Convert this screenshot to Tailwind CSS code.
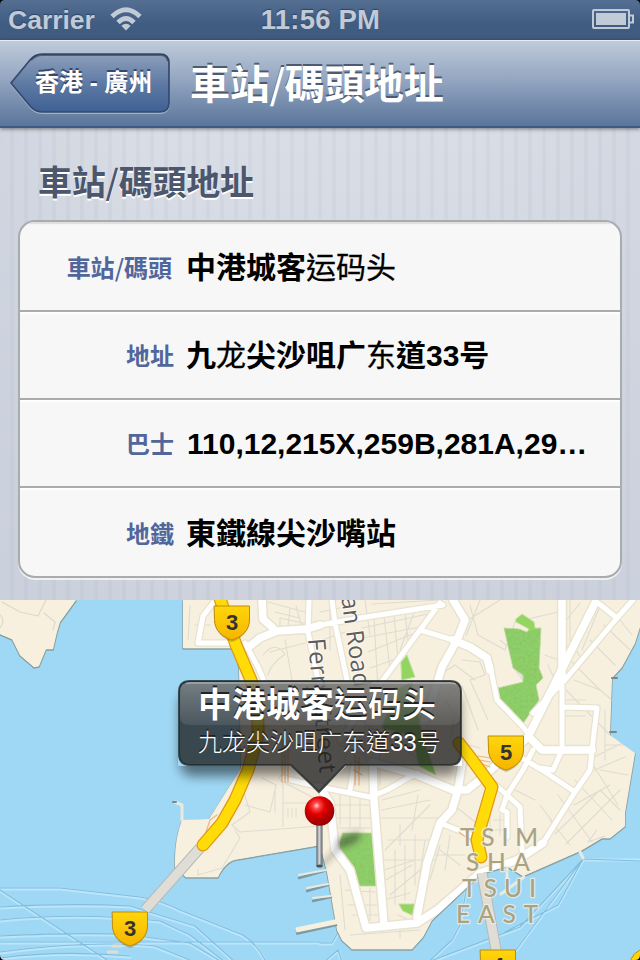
<!DOCTYPE html>
<html lang="zh-Hant">
<head>
<meta charset="utf-8">
<title>車站/碼頭地址</title>
<script src="https://cdn.jsdelivr.net/npm/@tailwindcss/browser@4"></script>
</head>
<body class="bg-black">
<div class="relative flex h-[960px] w-[640px] flex-col overflow-hidden font-['Liberation_Sans','Noto_Sans_CJK_TC',sans-serif]">

  <!-- Status bar -->
  <header class="grid h-10 shrink-0 grid-cols-3 items-center bg-linear-to-b from-[#546f92] via-[#405c81] via-60% to-[#3f5b80] px-2 text-[#c1cad7]">
    <div class="flex items-center gap-[15px]">
      <span class="text-[26.5px] leading-10 font-bold [text-shadow:0_-1px_1px_#2c4465]">Carrier</span>
      <svg class="mt-[-2px] h-6 w-8" viewBox="0 0 32 24" fill="none" stroke="#c1cad7" stroke-width="4.800">
        <path d="M2 9.500Q16 -4 30 9.500" /><path d="M8 15.500Q16 7.500 24 15.500" />
        <path d="M16 23.500L11.300 18.800Q16 14.800 20.700 18.800Z" fill="#c1cad7" stroke="none" />
      </svg>
    </div>
    <div class="pl-px text-center text-[27.5px] leading-10 font-bold tracking-[0.2px] whitespace-nowrap [text-shadow:0_-1px_1px_#2c4465]">11:56 PM</div>
    <svg class="mt-[-2px] -mr-[3px] h-[22px] w-[44px] justify-self-end" viewBox="0 0 44 22" fill="none">
      <rect x="2" y="2" width="36" height="18" rx="1" stroke="#c1cad7" stroke-width="2" />
      <rect x="5" y="5" width="30" height="12" fill="#c1cad7" />
      <path d="M39 7.500H42V14.500H39" stroke="#c1cad7" stroke-width="2" />
    </svg>
  </header>

  <!-- Navigation bar -->
  <nav class="relative z-10 flex h-[88px] shrink-0 items-start border-t border-b-2 border-t-[#e4ebf2] border-b-[#3d5a85] bg-linear-to-b from-[#bfcbdb] via-[#8fa2be] to-[#5a759b] pt-[11px] pl-[9px] shadow-[0_1px_4px_#0007]">
    <div class="relative h-[62px] w-[162px] pt-[3px]">
      <svg class="absolute inset-0" width="162" height="62" viewBox="0 0 162 62">
        <defs><linearGradient id="back" x2="0" y2="1"><stop stop-color="#8d9fbb" /><stop offset=".5" stop-color="#5f7ba4" /><stop offset="1" stop-color="#3e6094" /></linearGradient></defs>
        <path d="M2 31L21 8Q26 2 33 2H151Q160 2 160 11V51Q160 60 151 60H33Q26 60 21 54Z" transform="translate(0 1)" fill="none" stroke="#b3c1d5" stroke-width="1.500" />
        <path d="M2 31L21 8Q26 2 33 2H151Q160 2 160 11V51Q160 60 151 60H33Q26 60 21 54Z" fill="url(#back)" stroke="#34496b" stroke-width="1.700" />
        <path d="M22 8Q27 3 33 3H151Q158 3 159 9" fill="none" stroke="#29364d" stroke-opacity=".6" stroke-width="2" />
      </svg>
      <span class="relative block pl-[26px] text-[24px] leading-[56px] font-bold whitespace-nowrap text-white [text-shadow:0_-2px_0_#36496a]">香港 - 廣州</span>
    </div>
    <h1 class="ml-[19px] pt-px font-['Noto_Sans_CJK_TC',sans-serif] text-[40px] leading-[58px] font-bold tracking-[-0.3px] whitespace-nowrap text-white [text-shadow:0_-2px_0_#4d5b70]">車站<span class="font-medium">/</span>碼頭地址</h1>
  </nav>

  <!-- Grouped table -->
  <main class="flex h-[472px] shrink-0 flex-col bg-[repeating-linear-gradient(90deg,#0000_0_10px,#8b98b014_10px_14px),linear-gradient(90deg,#c6cedb77,#d9dce500_22%,#d9dce500_75%,#c9d0dd66),linear-gradient(#d9dde5,#cdd2dc)] px-[18px]">
    <h2 class="mt-[27px] pl-[20px] font-['Noto_Sans_CJK_TC',sans-serif] text-[34px] leading-[52px] font-bold tracking-[-0.2px] text-[#4c566c] [text-shadow:0_2px_0_#fff]">車站<span class="font-medium">/</span>碼頭地址</h2>
    <dl class="mt-[13px] h-[358px] overflow-hidden rounded-[17px] border-2 border-[#aaabad] bg-[#f7f7f7] text-[30px] font-bold text-black shadow-[0_2px_0_#ffffffb0]">
      <div class="flex h-[90px] items-center border-b-2 border-[#aaabad] shadow-[inset_0_2px_1px_#dedede]">
        <dt class="w-[154px] shrink-0 pt-px pr-[2px] text-right font-['Noto_Sans_CJK_TC',sans-serif] text-[24px] font-bold text-[#51669a]">車站<span class="font-medium">/</span>碼頭</dt>
        <dd class="ml-[12px] pt-[3px] font-['Liberation_Sans','Noto_Sans_CJK_SC',sans-serif]">中港城客<span class="font-normal [-webkit-text-stroke:0.3px_#000]">运码头</span></dd>
      </div>
      <div class="flex h-[88px] items-center border-t-2 border-b-2 border-t-white border-b-[#aaabad]">
        <dt class="w-[154px] shrink-0 pt-[2px] text-right text-[24px] text-[#51669a]">地址</dt>
        <dd class="ml-[12px] pb-[2px] font-['Liberation_Sans','Noto_Sans_CJK_SC',sans-serif]">九<span class="font-normal [-webkit-text-stroke:0.3px_#000]">龙</span>尖沙咀广<span class="font-normal [-webkit-text-stroke:0.3px_#000]">东</span>道33号</dd>
      </div>
      <div class="flex h-[88px] items-center border-t-2 border-b-2 border-t-white border-b-[#aaabad]">
        <dt class="w-[154px] shrink-0 pt-[2px] text-right text-[24px] text-[#51669a]">巴士</dt>
        <dd class="ml-[13px] pb-[2px]">110,12,215X,259B,281A,29…</dd>
      </div>
      <div class="flex h-[88px] items-center border-t-2 border-t-white">
        <dt class="w-[154px] shrink-0 pt-[3px] text-right text-[24px] text-[#51669a]">地鐵</dt>
        <dd class="ml-[12px]">東鐵線尖沙嘴站</dd>
      </div>
    </dl>
  </main>

  <!-- Map -->
  <section class="relative h-[360px] shrink-0 overflow-hidden">
    <svg class="block" width="640" height="360" viewBox="0 600 640 360" fill="none" stroke-linejoin="round" stroke-linecap="round">
      <defs>
        <linearGradient id="shield" x2="0" y2="1"><stop stop-color="#ffd60a" /><stop offset="1" stop-color="#f5b500" /></linearGradient>
        <clipPath id="land"><path d="M183 600V648H235L239 668L241 768L209 819L182 820Q174 840 175 868L186 877H218Q226 860 238 859L320 845L327 872L337 930L342 940L352 949H412L423 937L432 920L467 887L480 874L507 866L523 876L582 850L602 838L610 838L625 826V813L635 753L610 735L612 678L622 667L635 643L640 627V600Z" /></clipPath>
        <g id="badge">
          <path d="M-17.500 1H17.500V14C17.500 24 9 32 0 35C-9 32 -17.500 24 -17.500 14Z" fill="#7a5b10" fill-opacity=".35" transform="translate(0 2)" />
          <path d="M-17.500 1H17.500V15C17.500 25 10 32 0 35C-10 32 -17.500 25 -17.500 15Z" fill="url(#shield)" stroke="#bd8c08" />
        </g>
        <filter id="grain" x="0" y="0" width="1" height="1"><feTurbulence type="fractalNoise" baseFrequency=".35" numOctaves="2" seed="4" /><feColorMatrix values="0 0 0 0 .12  .9 0 0 0 -.15  0 .5 0 0 .1  0 0 0 0 .45" /><feComposite in2="SourceGraphic" operator="in" /></filter>
        <filter id="soft" x="-50%" y="-50%" width="200%" height="200%"><feGaussianBlur stdDeviation="3" /></filter>
        <g id="wide">
          <path d="M250 646L260 638L277 631L307 629L320 625M262 600L263 619L273 628M453 600L465 620L457 640L442 667L435 690L425 720M595 603L565 663L528 737L485 775M372 762L417 775L453 790L467 790L482 778M530 738L542 750H592" />
          <path d="M373 765L374 800L384 925M320 787L330 803L335 850L350 870L366 928L417 923L437 910L480 873L517 860L543 843M463 757L458 790L452 810L440 823L427 863L417 917" />
          <path d="M562 600V680M453 640L470 647L487 658L490 670" />
        </g>
        <path id="narrow" d="M198 643L203 616L217 598M198 643H230M307 629L320 625L360 618L443 605M309 600L308 632L322 700M332 600L335 623L347 680M440 603L420 630L383 680L340 740M420 630L453 640M490 665L497 700L523 727L533 740M562 680V750L553 770M592 750L597 708L563 707M592 750L590 770L575 792L543 843M633 600L617 618L565 680L533 713M598 603L617 618M520 757L542 770L575 792M533 750L523 770L507 795L502 810L507 812V837M507 795L520 807L522 850M490 780L507 795M440 823L478 838M370 797L387 790L417 773M350 790L354 765M283 778L320 787L370 797M245 643L258 667L268 690M553 770L540 768" />
      </defs>
      <path d="M0 600H640V960H0Z" fill="#9fd8f5" />

      <!-- ferry routes -->
      <g transform="translate(0 1)"><path d="M0 888H60L140 897Q160 900 180 910L243 935Q258 945 266 962M0 890L110 962M0 907Q70 903 130 906L195 926L235 962M0 920Q80 912 160 921L190 935L225 962M0 936Q90 932 130 935L190 943L222 962M0 942H320M0 952Q90 940 155 946L190 960M428 962L520 927L583 859H640M516 950L583 859M583 859L558 905L505 932M468 880L460 925L452 940L425 965M320 943H332L338 932M338 950L324 962M338 950L342 962M0 958Q60 950 130 956" stroke="#bce5fa" stroke-width="3" /></g>
      <path d="M0 888H60L140 897Q160 900 180 910L243 935Q258 945 266 962M0 890L110 962M0 907Q70 903 130 906L195 926L235 962M0 920Q80 912 160 921L190 935L225 962M0 936Q90 932 130 935L190 943L222 962M0 942H320M0 952Q90 940 155 946L190 960M428 962L520 927L583 859L640 861M516 950L583 859M583 859L558 905L505 932M468 880L460 925L452 940L425 965M320 943H332L338 932M338 950L324 962M338 950L342 962M0 958Q60 950 130 956" stroke="#80bedf" stroke-width="1.200" />

      <!-- shorelines and land -->
      <path d="M0 634L12 639L20 655L34 667L39 666L46 649H53L57 632L60 622L76 600H0Z" fill="#f7f0df" stroke="#86a0a2" stroke-width="1.500" transform="translate(0 1)" />
      <path d="M0 634L12 639L20 655L34 667L39 666L46 649H53L57 632L60 622L76 600H0Z" fill="#f7f0df" />
      <path d="M2 602L20 612L38 616L46 600M44 613L55 622L53 630M0 628Q6 620 0 615" stroke="#ddd9cb" stroke-width="1.200" />
      <path d="M183 600V648H235L239 668L241 768L209 819L182 820Q174 840 175 868L186 877H218Q226 860 238 859L320 845L327 872L337 930L342 940L352 949H412L423 937L432 920L467 887L480 874L507 866L523 876L582 850L602 838L610 838L625 826V813L635 753L610 735L612 678L622 667L635 643L640 627V600Z" fill="#f7f0df" stroke="#8aa3a5" stroke-width="1.500" transform="translate(0 1)" />
      <path d="M183 600V648H235L239 668L241 768L209 819L182 820Q174 840 175 868L186 877H218Q226 860 238 859L320 845L327 872L337 930L342 940L352 949H412L423 937L432 920L467 887L480 874L507 866L523 876L582 850L602 838L610 838L625 826V813L635 753L610 735L612 678L622 667L635 643L640 627V600Z" fill="#f7f0df" />
      <path d="M182 820V805L175 802M580 852L583 858M507 866V884M501 894L524 877" stroke="#e9eadf" stroke-width="3" />
      <path d="M299 877L324 870M307 890L328 884M313 900L331 896" stroke="#7b9aa4" stroke-width="2.500" transform="translate(0 1)" />
      <path d="M299 875L326 870M307 888L328 884M313 898L331 896" stroke="#ebe9df" stroke-width="2" />
      <path d="M296 933L337 924" stroke="#7b9aa4" stroke-width="4" stroke-linecap="butt" />
      <path d="M296 930L340 921" stroke="#f7f0df" stroke-width="5" stroke-linecap="butt" />
      <path d="M612 678H617M610 732H616M173 802H176" stroke="#76888a" stroke-width="2" />

      <g clip-path="url(#land)">
        <!-- building plots and lanes -->
        <g stroke="#dedcd1" stroke-width="1.100">
          <path d="M190 606L188 640M195 625H210M262 606V620L280 630V618L312 625M268 602L305 612M275 612L300 618M263 655Q275 640 285 654Q270 665 268 675M285 640L292 680M270 652L305 643M290 608L288 626M296 606L302 628" />
          <path d="M320 612L340 608M322 640L345 632M330 602V650M365 600L370 635M372 604L440 600M362 628L428 614M362 638L420 627M368 652L415 633M370 668L402 657M374 618L378 690M384 616L390 670M394 614L398 660M405 612L408 640M415 610L400 650" />
          <path d="M466 636L480 600M470 605L478 635L505 650L515 622L558 612M468 620L500 600M440 675L455 665L475 680M452 690L462 686L478 730M445 700L455 715L450 740L480 748M462 660L480 662L485 675L470 680L488 720M500 640L512 650" />
          <path d="M570 600V640L582 660M580 603L565 622M600 606L582 650M570 660L600 690M590 640L615 665M604 625L630 650M612 610L632 635M574 680L600 690L612 700M566 700H585M566 716H585M566 690L610 735M548 665L555 680M545 655L558 660" />
          <path d="M605 710V760M606 745H625M600 770L628 775M590 760L618 805M575 780L612 820M558 795L592 842M550 820L570 845M555 834L600 790M566 844L620 790M592 758L628 740M585 774L625 757M574 805L610 785M600 790L620 810M597 830L588 842L605 836" />
          <path d="M382 800L420 790M382 810L430 800M382 818L450 818M385 850L430 805M388 840L435 840M384 870L415 860M382 882L412 865M390 895L420 870M384 900L410 893M395 850V905M405 845V900M415 835V885M400 825V845M382 860H435M425 840L418 888M440 845L430 880M440 850L460 865M450 835L445 870M460 830L440 818M435 855H465M455 806L485 830" />
          <path d="M335 805H373M333 818H373M335 828H370M340 795V825M350 795V828M360 795V828M345 890L375 892M348 905L378 905M352 915H380M360 888V920M370 888V920M340 875L345 930M398 915L420 925M400 928V938M350 935L420 930" />
          <path d="M240 780L250 812L232 825L240 832L320 826M245 805L270 812L276 785L262 778M275 812V790M283 755V826M283 803H310M288 808V817M292 808V817M296 808V817M235 830L240 838L222 868L198 875V869M285 783L318 800V825M490 812V840M500 815V835M494 820H506M494 830H506M540 805L555 825M515 790L535 800M418 795L412 830M360 720L420 760M340 745L400 770M345 700V760M365 690V760M380 750V785M250 710L280 740M262 680V715M270 720L300 725" />
        </g>
        <!-- parks -->
        <g fill="#93d561" stroke="#c7dda2">
          <path d="M516 619L522 614L534 622L535 628H541L539 668L543 678L536 685L539 700L522 725L499 702L498 688L523 682V675L513 668L504 628L519 629L527 632L529 629L516 622Z" />
          <path d="M401 662L407 655L415 677L402 680ZM396 690L412 682L422 735L436 775L419 766L412 735L382 728ZM343 833H375L377 886H357L347 862L339 845ZM399 904H417L416 917L403 911Z" />
        </g>
        <path d="M504 628L519 629L527 632L541 628L539 668L543 678L536 685L539 700L522 725L499 702L498 688L523 682L513 668ZM343 833H375L377 886H357L347 862L339 845Z" filter="url(#grain)" opacity=".25" fill="#fff" />

        <!-- roads: casing then surface -->
        <use href="#wide" stroke="#e8e3cf" stroke-width="10.500" />
        <use href="#narrow" stroke="#e8e3cf" stroke-width="7.500" />
        <use href="#wide" stroke="#fff" stroke-width="7.500" />
        <use href="#narrow" stroke="#fff" stroke-width="5" />
        <g stroke="#efb67b" stroke-width="1.200"><path d="M282 740V782M285 742V782M288 742V782M478 756L490 758M480 760L490 762M482 764L490 767M240 795L247 785L245 775M206 832L210 820L217 815M459 832L470 840M355 755V785M359 757V785M354 760L362 765M354 770L362 775" /></g>
      </g>

      <!-- bridges and expressways -->
      <path d="M200 848L145 910M482 873L497 955" stroke="#b5bbb6" stroke-width="11" stroke-linecap="butt" />
      <path d="M200 848L145 910M482 873L497 955" stroke="#dfddd5" stroke-width="9" stroke-linecap="butt" />
      <path d="M113 946H121M108 952H117" stroke="#dfddd5" stroke-width="3" />
      <path stroke="#df9716" stroke-width="13" d="M217 590L236 645L251 680Q259 708 258 735L248 770L235 800L222 823L203 845M459 743L470 757L492 787L481 825L477 840L481 857" />
      <path stroke="#ffdc08" stroke-width="10.500" d="M217 590L236 645L251 680Q259 708 258 735L248 770L235 800L222 823L203 845M459 743L470 757L492 787L481 825L477 840L481 857" />

      <!-- street and district names -->
      <g font-family="Open Sans, sans-serif" font-size="24" font-weight="500" fill="#5e5d5b" stroke="#fff" stroke-opacity=".7" stroke-width="2" paint-order="stroke">
        <text transform="translate(308 639) rotate(85)" textLength="135">Ferry Street</text>
        <text transform="translate(354 688) rotate(82)" text-anchor="end">Nathan Road</text>
      </g>
      <g font-family="Lato, sans-serif" font-size="24.500" font-weight="500" fill="#aba282" stroke="#f8f3e4" stroke-opacity=".7" stroke-width="2.500" paint-order="stroke">
        <text x="460" y="846" textLength="78">TSIM</text>
        <text x="466" y="871" textLength="64">SHA</text>
        <text x="462" y="897" textLength="74">TSUI</text>
        <text x="456" y="923" textLength="82">EAST</text>
      </g>

      <!-- route shields -->
      <g font-family="Liberation Sans, sans-serif" font-size="22" font-weight="700" text-anchor="middle">
        <use href="#badge" x="232" y="605" /><text x="232" y="630" fill="#333">3</text>
        <use href="#badge" x="506" y="735" /><text x="506" y="760" fill="#333">5</text>
        <use href="#badge" x="130" y="911" /><text x="130" y="936" fill="#333">3</text>
        <use href="#badge" x="498" y="949" /><text x="498" y="973" fill="#333">4</text>
      </g>
      <circle cx="646" cy="965" r="16" fill="#ffd60a" stroke="#bd8c08" />

      <!-- pin -->
      <path d="M321 864L337 848Q334 838 348 835Q362 829 361 836Q357 845 341 848L323 866Z" fill="#333" fill-opacity=".5" filter="url(#soft)" />
      <defs>
        <radialGradient id="ball" cx=".4" cy=".32" r=".65"><stop stop-color="#ffd9d9" /><stop offset=".18" stop-color="#f44" /><stop offset=".45" stop-color="#e00000" /><stop offset="1" stop-color="#960000" /></radialGradient>
        <linearGradient id="rod"><stop stop-color="#555a60" /><stop offset=".45" stop-color="#dadde0" /><stop offset="1" stop-color="#565b60" /></linearGradient>
      </defs>
      <rect x="316.500" y="822" width="6" height="45" rx="1.500" fill="url(#rod)" />
      <ellipse cx="319.500" cy="866" rx="3" ry="1.500" fill="#4a5157" />
      <circle cx="319.500" cy="811" r="14.800" fill="url(#ball)" />
    </svg>

    <!-- Callout -->
    <div class="absolute top-[80px] left-[178px] h-[115px] w-[284px]">
      <svg class="absolute inset-0 overflow-visible" width="284" height="115" viewBox="0 0 284 115">
        <defs>
          <linearGradient id="gloss" x2="0" y2="1"><stop stop-color="#fff" stop-opacity=".3" /><stop offset="1" stop-color="#fff" stop-opacity=".09" /></linearGradient>
          <filter id="drop" x="-10%" y="-20%" width="120%" height="150%"><feGaussianBlur stdDeviation="6" /></filter>
          <clipPath id="below"><path d="M-30 86H114L141 113L168 86H314V140H-30ZM-30 -10H0V86H-30ZM284 -10H314V86H284Z" /></clipPath>
        </defs>
        <g clip-path="url(#below)"><rect y="12" x="2" width="280" height="84" rx="12" fill="#000" fill-opacity=".5" filter="url(#drop)" /></g>
        <path d="M12 1H272Q283 1 283 12V74Q283 85 272 85H167L141 112L113 85H12Q1 85 1 74V12Q1 1 12 1Z" fill="#191919" fill-opacity=".76" stroke="#222a2d" stroke-opacity=".8" stroke-width="2" />
        <path d="M12 2H272Q282 2 282 12V37Q282 45 272 45H12Q2 45 2 37V12Q2 2 12 2Z" fill="url(#gloss)" />
        <path d="M8 3.500Q10 3 12 3H272Q276 3 278 4" fill="none" stroke="#fff" stroke-opacity=".35" stroke-width="1.500" />
      </svg>
      <div class="relative flex flex-col pt-[2px] pl-5 font-['Liberation_Sans','Noto_Sans_CJK_SC',sans-serif] whitespace-nowrap text-white [text-shadow:0_-2px_0_#222]">
        <strong class="text-[34px] leading-[47px] font-bold">中港城客<span class="font-medium">运码头</span></strong>
        <span class="text-[24px] leading-[28px] [font-weight:300]">九龙尖沙咀广东道33号</span>
      </div>
    </div>
  </section>

  <!-- Rounded screen corners -->
  <svg class="pointer-events-none absolute inset-0 z-20" width="640" height="960" viewBox="0 0 640 960"><path d="M0 0H5Q0 0 0 5ZM640 0H635Q640 0 640 5ZM0 960H5Q0 960 0 955ZM640 960H635Q640 960 640 955Z" fill="#000" /></svg>
</div>
</body>
</html>
